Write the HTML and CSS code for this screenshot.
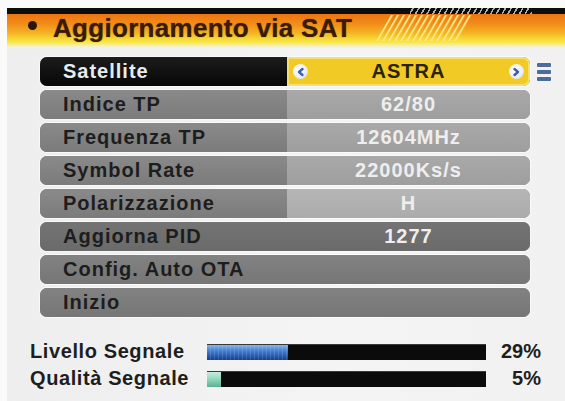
FILE: index.html
```html
<!DOCTYPE html>
<html lang="it">
<head>
<meta charset="utf-8">
<title>Aggiornamento via SAT</title>
<link rel="stylesheet" href="styles.css">
</head>
<body>
<div class="screen">
  <header class="header">
    <div class="topbar"><span class="topbar-hatch"></span></div>
    <div class="titlebar">
      <span class="bullet"></span>
      <h1 class="title">Aggiornamento via SAT</h1>
      <svg class="hatch" viewBox="0 0 100 26" width="100" height="26">
        <defs>
          <pattern id="stripes" width="6" height="26" patternUnits="userSpaceOnUse" patternTransform="skewX(-30)">
            <rect x="0" y="0" width="2.2" height="26" fill="#ffe680"/>
          </pattern>
        </defs>
        <polygon points="15,0 100,0 85,26 0,26" fill="url(#stripes)"/>
      </svg>
    </div>
  </header>

  <main class="menu">
    <div class="row-line">
      <div class="row row-selected">
        <div class="label">Satellite</div>
        <div class="value value-select">
          <span class="arrow"><svg viewBox="0 0 10 10" width="10" height="10"><path d="M6.5 2 L3 5 L6.5 8" fill="none" stroke="#3b5fa8" stroke-width="2.4" stroke-linecap="round" stroke-linejoin="round"/></svg></span>
          <span class="value-text">ASTRA</span>
          <span class="arrow"><svg viewBox="0 0 10 10" width="10" height="10"><path d="M3.5 2 L7 5 L3.5 8" fill="none" stroke="#3b5fa8" stroke-width="2.4" stroke-linecap="round" stroke-linejoin="round"/></svg></span>
        </div>
      </div>
      <svg class="list-icon" viewBox="0 0 14 20" width="14" height="20">
        <rect x="0" y="1" width="14" height="4" rx="1" fill="#4c6c9c"/>
        <rect x="0" y="8" width="14" height="4" rx="1" fill="#4c6c9c"/>
        <rect x="0" y="15" width="14" height="4" rx="1" fill="#4c6c9c"/>
      </svg>
    </div>
    <div class="row">
      <div class="label">Indice TP</div>
      <div class="value">62/80</div>
    </div>
    <div class="row">
      <div class="label">Frequenza TP</div>
      <div class="value">12604MHz</div>
    </div>
    <div class="row">
      <div class="label">Symbol Rate</div>
      <div class="value">22000Ks/s</div>
    </div>
    <div class="row">
      <div class="label">Polarizzazione</div>
      <div class="value value-light">H</div>
    </div>
    <div class="row row-dark">
      <div class="label">Aggiorna PID</div>
      <div class="value value-plain">1277</div>
    </div>
    <div class="row row-plain">
      <div class="label">Config. Auto OTA</div>
    </div>
    <div class="row row-plain">
      <div class="label">Inizio</div>
    </div>
  </main>

  <section class="signal">
    <div class="signal-row">
      <span class="signal-label">Livello Segnale</span>
      <div class="bar"><div class="fill fill-level" style="width:29%"></div></div>
      <span class="signal-pct">29%</span>
    </div>
    <div class="signal-row">
      <span class="signal-label">Qualità Segnale</span>
      <div class="bar"><div class="fill fill-quality" style="width:5%"></div></div>
      <span class="signal-pct">5%</span>
    </div>
  </section>
</div>
</body>
</html>
```

FILE: styles.css
```css
html, body {
  margin: 0;
  padding: 0;
}

body {
  width: 565px;
  height: 401px;
  overflow: hidden;
  background: #fafafa;
  font-family: "Liberation Sans", Arial, sans-serif;
}

.screen {
  margin-left: 7px;
  height: 401px;
  background: linear-gradient(90deg, #eeeeee 0%, #f4f4f4 60%, #f1f1f1 100%);
  display: flex;
  flex-direction: column;
}

/* ---------- header ---------- */
.header {
  padding-top: 8px;
  background: #fafafa;
}

.topbar {
  position: relative;
  height: 6px;
  background: #0c0c0c;
}

.topbar-hatch {
  position: absolute;
  left: 403px;
  top: 0;
  width: 122px;
  height: 6px;
  background: repeating-linear-gradient(120deg, #0c0c0c 0px, #0c0c0c 2px, #b0b0b0 2px, #b0b0b0 3.5px, #0c0c0c 3.5px, #0c0c0c 5px);
}

.titlebar {
  position: relative;
  height: 34px;
  display: flex;
  align-items: flex-start;
  background: linear-gradient(180deg, #ec7412 0%, #f28e1a 30%, #f4b224 55%, #f6d632 72%, #f7e84e 84%, #f6f0c4 95%, #f2f0e6 100%);
}

.bullet {
  width: 9px;
  height: 9px;
  border-radius: 50%;
  background: #2a1606;
  margin: 7px 0 0 21px;
}

.title {
  margin: 1px 0 0 16px;
  font-size: 26px;
  line-height: 26px;
  font-weight: bold;
  color: #3a1c06;
  letter-spacing: 0.3px;
  text-shadow: 0 0 1px rgba(40, 16, 0, 0.6);
}

.hatch {
  position: absolute;
  left: 366px;
  top: 1px;
  display: block;
}

/* ---------- menu ---------- */
.menu {
  margin-top: 9px;
  padding-left: 33px;
  display: flex;
  flex-direction: column;
  gap: 4px;
}

.row-line {
  display: flex;
  align-items: center;
}

.row {
  width: 490px;
  height: 29px;
  display: flex;
  border-radius: 7px;
  overflow: hidden;
  background: #7f7f7f;
  box-shadow: 0 0 0 1px rgba(255, 255, 255, 0.6);
}

.label {
  width: 224px;
  padding-left: 23px;
  font-size: 20px;
  line-height: 29px;
  font-weight: bold;
  letter-spacing: 1px;
  color: #1d1d1d;
  background: linear-gradient(180deg, #8a8a8a 0%, #7b7b7b 100%);
  white-space: nowrap;
}

.value {
  flex: 1;
  text-align: center;
  font-size: 20px;
  line-height: 29px;
  font-weight: bold;
  letter-spacing: 1px;
  color: #eeeeee;
  background: linear-gradient(180deg, #a9a9a9 0%, #9e9e9e 100%);
}

.value-light {
  background: linear-gradient(180deg, #b6b6b6 0%, #ababab 100%);
}

.row-dark .label,
.row-dark .value-plain {
  background: linear-gradient(180deg, #747474 0%, #6a6a6a 100%);
}

.row-plain .label {
  width: 467px;
  background: linear-gradient(180deg, #828282 0%, #767676 100%);
}

.row-selected .label {
  color: #e6ecef;
  background: linear-gradient(180deg, #1c1c1c 0%, #070707 100%);
}

.value-select {
  display: flex;
  align-items: center;
  justify-content: space-between;
  padding: 0 6px;
  color: #2c2204;
  background: #f1ca25;
  box-shadow: inset 0 0 0 2px #f5de72;
  border-radius: 0 7px 7px 0;
}

.arrow {
  width: 15px;
  height: 15px;
  border-radius: 50%;
  background: radial-gradient(circle at 40% 40%, #ffffff 0%, #e8ecf2 60%, #c9d2de 100%);
  display: flex;
  align-items: center;
  justify-content: center;
}

.arrow svg {
  display: block;
}

.list-icon {
  margin-left: 7px;
  display: block;
}

/* ---------- signal ---------- */
.signal {
  margin-top: 21px;
  padding-left: 23px;
  display: flex;
  flex-direction: column;
}

.signal-row {
  height: 27px;
  display: flex;
  align-items: center;
}

.signal-label {
  width: 177px;
  font-size: 20px;
  font-weight: bold;
  letter-spacing: 0.6px;
  color: #1e1e1e;
  white-space: nowrap;
}

.bar {
  width: 279px;
  height: 16px;
  background: #0b0b0b;
  border-top: 1px solid #3a3a3a;
  box-sizing: border-box;
}

.fill {
  height: 100%;
}

.fill-level {
  background: repeating-linear-gradient(90deg, rgba(255, 255, 255, 0) 0 3px, rgba(255, 255, 255, 0.12) 3px 4px),
    linear-gradient(180deg, #84b4ea 0%, #4a84d4 35%, #2a5eb4 70%, #1c3f86 100%);
}

.fill-quality {
  background: linear-gradient(180deg, #c8ece0 0%, #8ed6ba 50%, #5fae94 100%);
}

.signal-pct {
  width: 55px;
  text-align: right;
  font-size: 20px;
  font-weight: bold;
  color: #1e1e1e;
}
```
